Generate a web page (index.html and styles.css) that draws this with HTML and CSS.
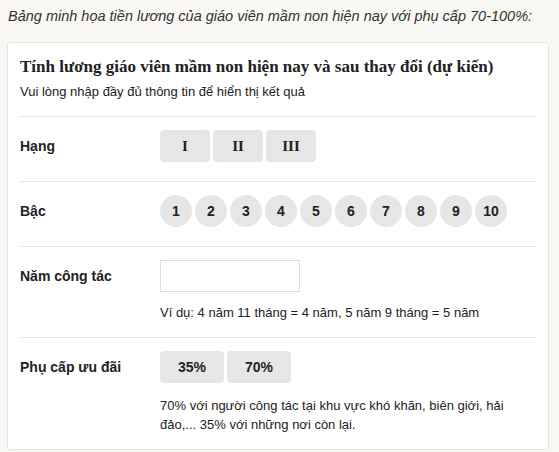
FILE: index.html
```html
<!DOCTYPE html>
<html lang="vi">

<head>
    <meta charset="UTF-8">
    <meta name="viewport" content="width=device-width, initial-scale=1.0">
    <title>Tính lương giáo viên mầm non</title>
    <link rel="stylesheet" href="styles.css">
</head>

<body>
    <p class="caption">Bảng minh họa tiền lương của giáo viên mầm non hiện nay với phụ cấp 70-100%:</p>

    <div class="card">
        <div class="card-head">
            <h2>Tính lương giáo viên mầm non hiện nay và sau thay đổi (dự kiến)</h2>
            <p>Vui lòng nhập đầy đủ thông tin để hiển thị kết quả</p>
        </div>

        <div class="row">
            <div class="label">Hạng</div>
            <div class="field">
                <div class="options">
                    <button class="opt roman">I</button>
                    <button class="opt roman">II</button>
                    <button class="opt roman">III</button>
                </div>
            </div>
        </div>

        <div class="row">
            <div class="label">Bậc</div>
            <div class="field">
                <div class="options">
                    <button class="circle">1</button>
                    <button class="circle">2</button>
                    <button class="circle">3</button>
                    <button class="circle">4</button>
                    <button class="circle">5</button>
                    <button class="circle">6</button>
                    <button class="circle">7</button>
                    <button class="circle">8</button>
                    <button class="circle">9</button>
                    <button class="circle">10</button>
                </div>
            </div>
        </div>

        <div class="row">
            <div class="label">Năm công tác</div>
            <div class="field">
                <div class="options">
                    <input type="text" class="years">
                </div>
                <p class="note">Ví dụ: 4 năm 11 tháng = 4 năm, 5 năm 9 tháng = 5 năm</p>
            </div>
        </div>

        <div class="row last">
            <div class="label">Phụ cấp ưu đãi</div>
            <div class="field">
                <div class="options">
                    <button class="opt pct">35%</button>
                    <button class="opt pct">70%</button>
                </div>
                <p class="note long">70% với người công tác tại khu vực khó khăn, biên giới, hải đảo,... 35% với những nơi còn lại.</p>
            </div>
        </div>
    </div>
</body>

</html>
```

FILE: styles.css
```css
body {
    font-family: 'Liberation Sans', Arial, sans-serif;
    margin: 0;
    padding: 6px 10px 0 7px;
    background-color: #f9f8f4;
    color: #222;
}

.caption {
    margin: 0 0 16px 1px;
    font-size: 14.5px;
    line-height: 20px;
    font-style: italic;
    color: #333;
    white-space: nowrap;
}

.card {
    box-sizing: border-box;
    width: 542px;
    background-color: white;
    border: 1px solid #e3e3e1;
    border-radius: 3px;
    padding: 0 12px;
}

.card-head {
    padding: 12px 0 15px;
    border-bottom: 1px solid #e5e5e5;
}

.card-head h2 {
    margin: 0;
    font-family: 'Liberation Serif', 'Times New Roman', serif;
    font-size: 17px;
    line-height: 24px;
    font-weight: bold;
    color: #222;
}

.card-head p {
    margin: 4px 0 0;
    font-size: 13px;
    line-height: 18px;
}

.row {
    display: flex;
    padding: 13px 0 15px;
    border-bottom: 1px solid #e5e5e5;
}

.row.last {
    border-bottom: none;
    padding-bottom: 15px;
}

.label {
    width: 140px;
    flex-shrink: 0;
    font-size: 14px;
    font-weight: bold;
    line-height: 32px;
}

.field {
    flex: 1;
}

.options {
    display: flex;
    gap: 3px;
    margin-bottom: 4px;
}

button {
    border: none;
    background-color: #e6e6e6;
    color: #222;
    padding: 0;
    cursor: pointer;
}

.opt {
    height: 32px;
    border-radius: 4px;
}

.roman {
    width: 50px;
    font-family: 'Liberation Serif', 'Times New Roman', serif;
    font-size: 15px;
    font-weight: bold;
}

.pct {
    width: 64px;
    font-family: 'Liberation Sans', Arial, sans-serif;
    font-size: 14px;
    font-weight: bold;
}

.circle {
    width: 32px;
    height: 32px;
    border-radius: 50%;
    font-family: 'Liberation Sans', Arial, sans-serif;
    font-size: 14px;
    font-weight: bold;
}

.years {
    width: 140px;
    height: 32px;
    box-sizing: border-box;
    border: 1px solid #ddd;
    margin: 0;
}

.note {
    margin: 12px 0 0;
    font-size: 13px;
    line-height: 18px;
    max-width: 350px;
}

.note.long {
    margin-top: 13px;
    line-height: 19px;
}
```
